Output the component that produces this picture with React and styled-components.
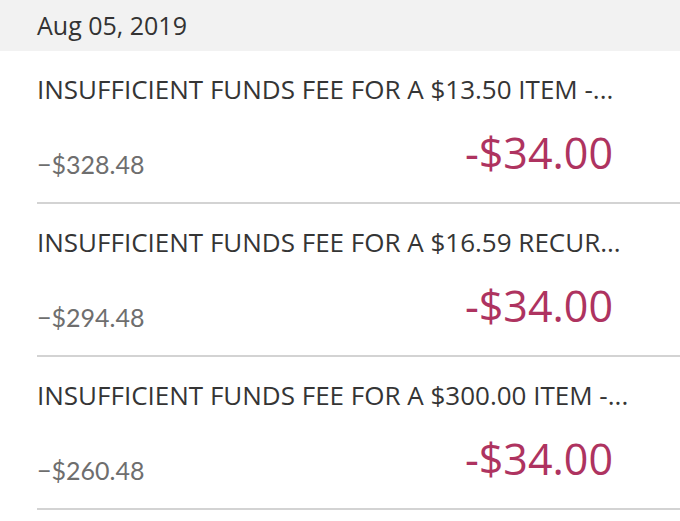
import React from "react";
import styled, { createGlobalStyle } from "styled-components";

const Global = createGlobalStyle`
  html, body { margin: 0; padding: 0; background: #fff; }
  body { font-family: "Open Sans", "Noto Sans", sans-serif; -webkit-font-smoothing: antialiased; }
`;

const Page = styled.div`
  width: 680px;
  background: #fff;
`;

const DateHeader = styled.div`
  height: 51px;
  background: #f2f2f2;
  display: flex;
  align-items: center;
  padding-left: 37px;
  padding-bottom: 2px;
  font-size: 25px;
  color: #333;
  box-sizing: border-box;
`;

const Row = styled.div`
  margin-left: 37px;
  height: 153px;
  box-sizing: border-box;
  border-bottom: 2px solid #d3d3d3;
  padding-top: 20px;
  padding-right: 67px;
  padding-bottom: 23px;
  display: flex;
  flex-direction: column;
`;

const Title = styled.div`
  font-size: 26px;
  color: #353535;
  white-space: nowrap;
  line-height: 36px;
`;

const Bottom = styled.div`
  display: flex;
  justify-content: space-between;
  align-items: flex-end;
  margin-top: auto;
`;

const Balance = styled.div`
  font-family: "Lato", "Open Sans", sans-serif;
  font-size: 25px;
  line-height: 30px;
  color: #6e6e6e;
`;

const Amount = styled.div`
  font-size: 43px;
  color: #ae3360;
  line-height: 44px;
  margin-bottom: 4px;
`;

const rows = [
  { title: "INSUFFICIENT FUNDS FEE FOR A $13.50 ITEM -...", balance: "\u2212$328.48" },
  { title: "INSUFFICIENT FUNDS FEE FOR A $16.59 RECUR...", balance: "\u2212$294.48" },
  { title: "INSUFFICIENT FUNDS FEE FOR A $300.00 ITEM -...", balance: "\u2212$260.48" },
];

export default function App() {
  return (
    <Page>
      <Global />
      <DateHeader>Aug 05, 2019</DateHeader>
      {rows.map((r) => (
        <Row key={r.balance}>
          <Title>{r.title}</Title>
          <Bottom>
            <Balance>{r.balance}</Balance>
            <Amount>-$34.00</Amount>
          </Bottom>
        </Row>
      ))}
    </Page>
  );
}
